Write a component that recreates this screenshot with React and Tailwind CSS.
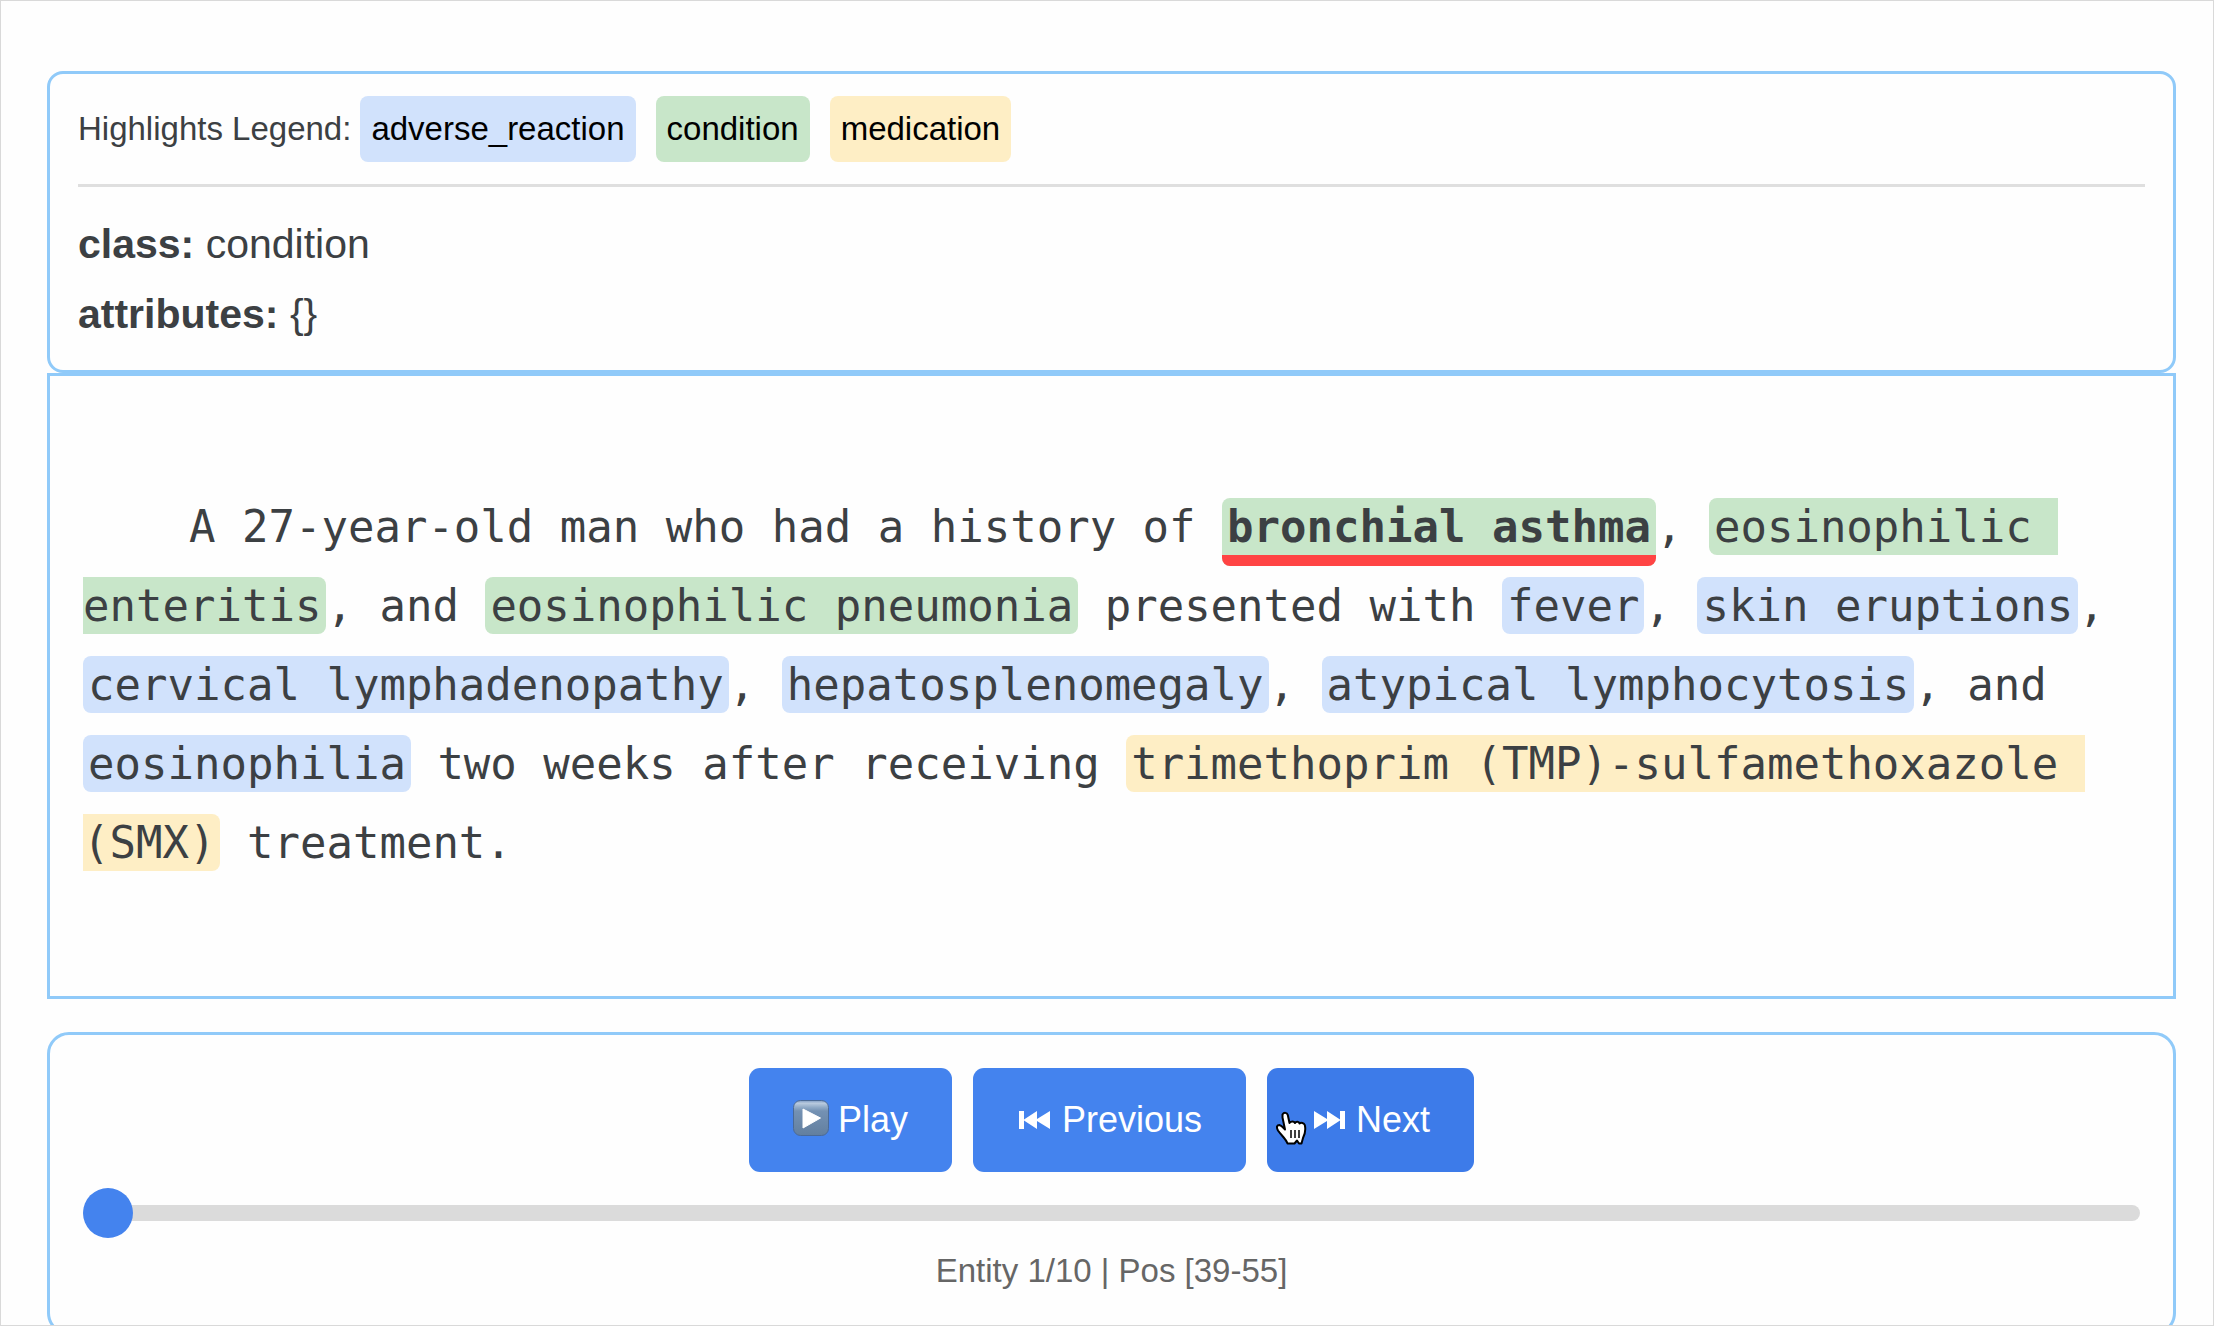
import { useState } from 'react';

const COLORS = {
  adverse_reaction: 'bg-[#d1e2fc]',
  condition: 'bg-[#c8e6c9]',
  medication: 'bg-[#feeec5]',
};

// Plain strings are copied through, objects are highlighted entities.
const passage = [
  '    A 27-year-old man who had a history of ',
  { text: 'bronchial asthma', type: 'condition', current: true },
  ', ',
  { text: 'eosinophilic enteritis', type: 'condition' },
  ', and ',
  { text: 'eosinophilic pneumonia', type: 'condition' },
  ' presented with ',
  { text: 'fever', type: 'adverse_reaction' },
  ', ',
  { text: 'skin eruptions', type: 'adverse_reaction' },
  ', ',
  { text: 'cervical lymphadenopathy', type: 'adverse_reaction' },
  ', ',
  { text: 'hepatosplenomegaly', type: 'adverse_reaction' },
  ', ',
  { text: 'atypical lymphocytosis', type: 'adverse_reaction' },
  ', and ',
  { text: 'eosinophilia', type: 'adverse_reaction' },
  ' two weeks after receiving ',
  { text: 'trimethoprim (TMP)-sulfamethoxazole (SMX)', type: 'medication' },
  ' treatment.',
];

const PlayIcon = () => (
  <svg className="h-10 w-9" viewBox="0 0 36 40" aria-hidden="true">
    <defs>
      <linearGradient id="play-face" x1="0" y1="0" x2="0" y2="1">
        <stop offset="0" stopColor="#7f9cc4" />
        <stop offset="0.08" stopColor="#b9cade" />
        <stop offset="0.2" stopColor="#8fa9c6" />
        <stop offset="0.3" stopColor="#7491b3" />
        <stop offset="1" stopColor="#627f9f" />
      </linearGradient>
    </defs>
    <rect x="0.5" y="0.5" width="35" height="35" rx="7" fill="url(#play-face)" stroke="#4b6a96" />
    <path d="M10 9 27.500 18 10 28Z" fill="#fff" stroke="#fff" strokeLinejoin="round" />
  </svg>
);

const PreviousIcon = () => (
  <svg className="h-9 w-9" viewBox="0 0 36 36" fill="currentColor" aria-hidden="true">
    <path d="M2 9h5v8.500L20 9v8L33 9v18L20 19v8L7 18.500V27H2Z" />
  </svg>
);

const NextIcon = () => (
  <svg className="h-9 w-9" viewBox="0 0 36 36" fill="currentColor" aria-hidden="true">
    <path d="M34 9h-5v8.500L16 9v8L3 9v18L16 19v8L29 18.500V27h5Z" />
  </svg>
);

const HandCursor = () => (
  <svg
    className="pointer-events-none absolute top-[43px] left-2 h-[36px] w-[32px]"
    viewBox="0 0 32 36"
    fill="none"
    aria-hidden="true"
  >
    <path
      d="M7.500 3.500C9 1 12 1.500 12.800 4L14.500 12C16 10 19 10 20 12C21 10.300 24 10.500 24.500 12.500C26 11 29 12 29.800 14C31 19 30 23 28 27L26.500 32.500H24L22 29.500L19.500 32.500H12.500C11 28 6 24 3 19.500C1 16 2 14 4.500 14C7 14.500 8.500 17 10 18.500L7.500 6.500Z"
      fill="#fff"
      stroke="#000"
      strokeWidth="2"
      strokeLinejoin="round"
    />
    <path d="M16 19v8M20 19v8M24 19v8" stroke="#000" strokeWidth="1.500" />
  </svg>
);

const ControlButton = ({ icon: Icon, label, hovered, children }) => (
  <button
    type="button"
    className={`relative flex h-[104px] items-center gap-[9px] rounded-[11px] px-11 text-[36px] leading-[42px] text-white ${
      hovered ? 'bg-[#3d7be9]' : 'bg-[#4483ee]'
    }`}
  >
    <Icon />
    {label}
    {children}
  </button>
);

const App = () => {
  const [position, setPosition] = useState(0);

  return (
    <div className="h-screen overflow-hidden border border-[#d9d9d9] bg-[#fefefe] pt-[70px] pr-[37px] pl-[46px] font-['Liberation_Sans',Arial,sans-serif] text-[#3c4043]">
      <section className="rounded-[16px] border-3 border-[#90caf9] px-7 pt-[22px] pb-[21px]">
        <div className="flex items-center gap-[9px] border-b-3 border-[#dfdfdf] pb-[22px] text-[33px] leading-[66px]">
          <span>Highlights Legend:</span>
          <div className="flex gap-5 text-black">
            {Object.keys(COLORS).map((type) => (
              <span key={type} className={`rounded-[8px] px-[11px] ${COLORS[type]}`}>
                {type}
              </span>
            ))}
          </div>
        </div>
        <div className="pt-[22px] text-[41px] leading-[70px]">
          <div>
            <strong>class:</strong> condition
          </div>
          <div>
            <strong>attributes:</strong> {'{}'}
          </div>
        </div>
      </section>

      <section className="border-3 border-[#90caf9] px-[33px] pt-[111px] pb-[114px]">
        <p className="font-['DejaVu_Sans_Mono',monospace] text-[44px] leading-[79px] whitespace-pre-wrap">
          {passage.map((part, index) =>
            typeof part === 'string' ? (
              part
            ) : (
              <span
                key={index}
                className={`rounded-[8px] px-[5px] py-[3px] ${COLORS[part.type]} ${
                  part.current ? 'border-b-[11px] border-[#ff4444] font-bold' : ''
                }`}
              >
                {part.text}
              </span>
            )
          )}
        </p>
      </section>

      <section className="mt-[33px] rounded-[22px] border-3 border-[#90caf9] p-[33px]">
        <div className="flex justify-center gap-[21px]">
          <ControlButton icon={PlayIcon} label="Play" />
          <ControlButton icon={PreviousIcon} label="Previous" />
          <ControlButton icon={NextIcon} label="Next" hovered>
            <HandCursor />
          </ControlButton>
        </div>
        <input
          type="range"
          min="0"
          max="9"
          value={position}
          onChange={(e) => setPosition(Number(e.target.value))}
          aria-label="Entity position"
          className="mt-[33px] block h-4 w-full appearance-none rounded-full bg-[#dbdbdb] outline-none [&::-webkit-slider-thumb]:h-[50px] [&::-webkit-slider-thumb]:w-[50px] [&::-webkit-slider-thumb]:appearance-none [&::-webkit-slider-thumb]:rounded-full [&::-webkit-slider-thumb]:bg-[#4483ee]"
        />
        <div className="mt-[22px] text-center text-[33px] leading-[56px] text-[#666666]">
          Entity 1/10 | Pos [39-55]
        </div>
      </section>
    </div>
  );
};

export default App;
